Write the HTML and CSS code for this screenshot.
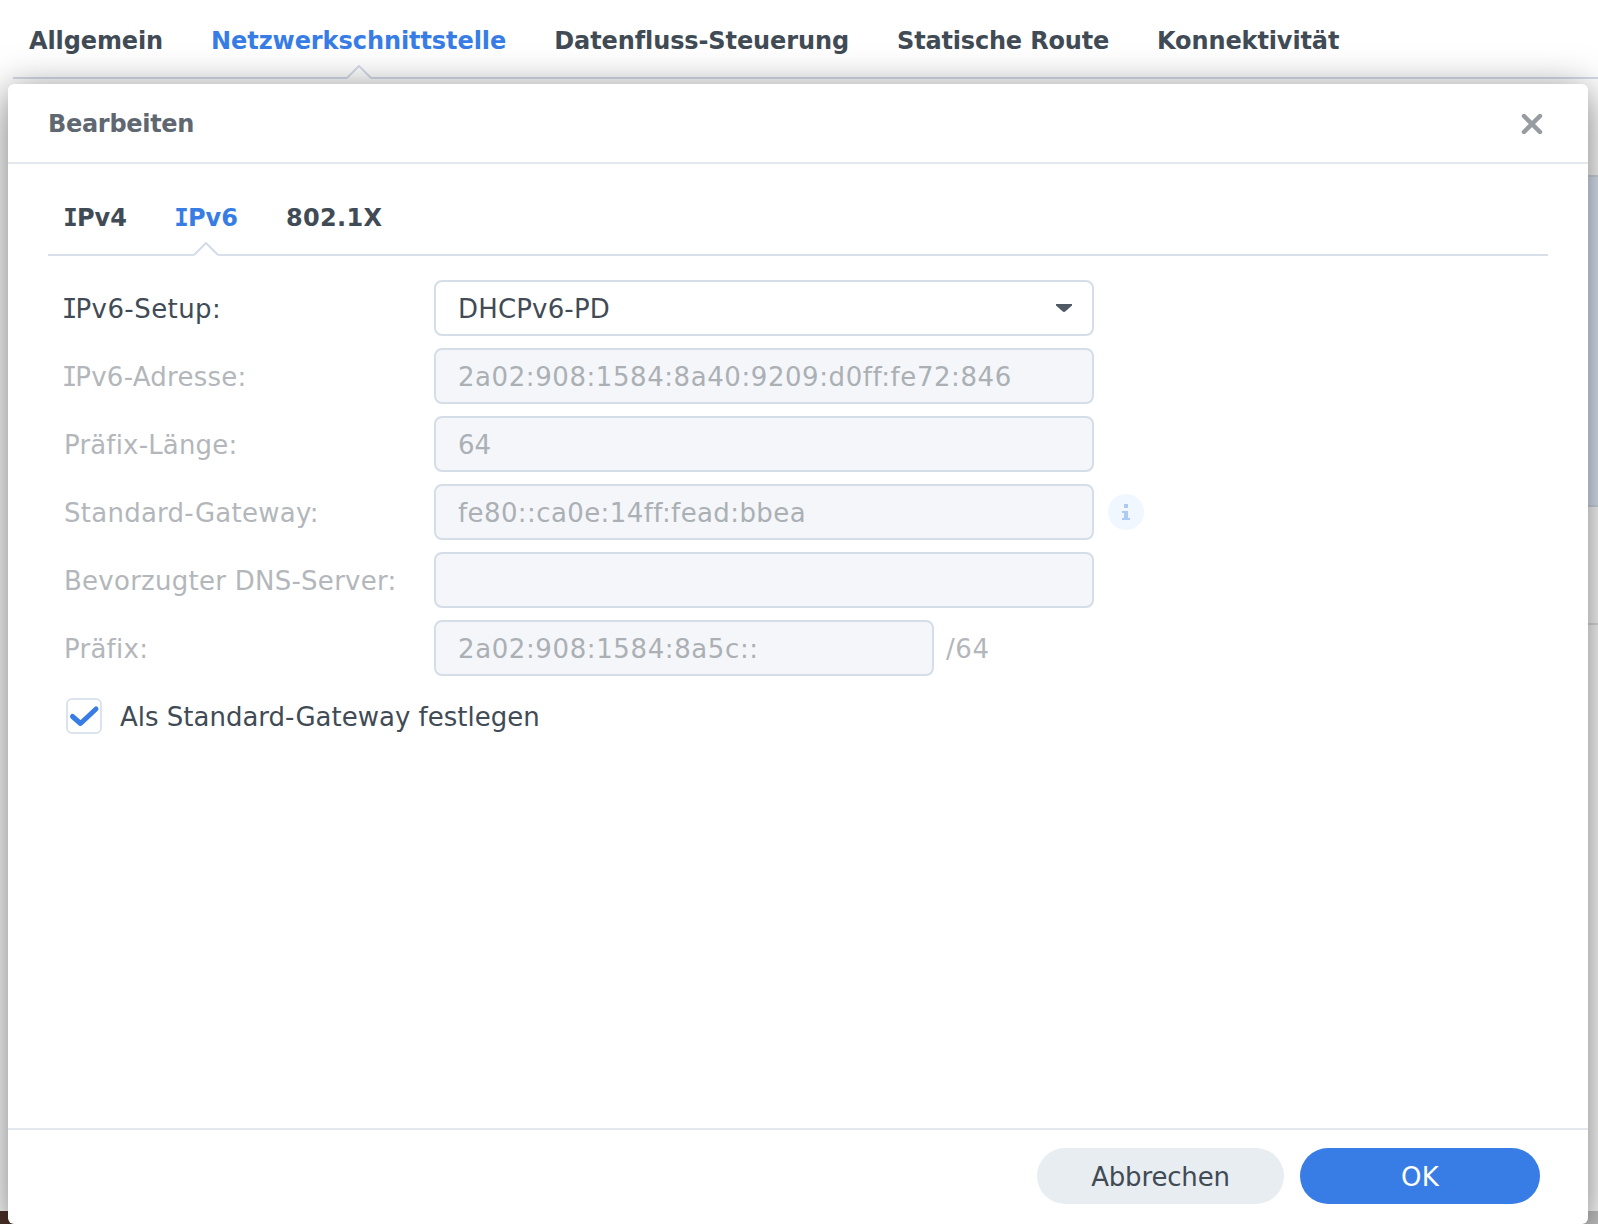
FILE: index.html
```html
<!DOCTYPE html>
<html lang="de">
<head>
<meta charset="utf-8">
<title>Bearbeiten</title>
<link rel="stylesheet" href="styles.css">
</head>
<body>
<div class="screen">
  <div class="page">
    <nav class="tabs page-tabs">
      <span class="tab t-allgemein">Allgemein</span>
      <span class="tab t-netz active">Netzwerkschnittstelle<svg class="notch" width="24" height="14" viewBox="0 0 24 14"><path class="notch-fill" d="M0 14V12L12 1L24 12V14Z"/><path class="notch-line" d="M0 13L12 1L24 13"/></svg></span>
      <span class="tab t-daten">Datenfluss-Steuerung</span>
      <span class="tab t-route">Statische Route</span>
      <span class="tab t-konn">Konnektivität</span>
    </nav>
    <div class="rows">
      <div class="row-selected"></div>
      <div class="row-plain"></div>
    </div>
  </div>
  <div class="desktop"></div>

  <section class="dialog">
    <header class="dialog-head">
      <h1 class="title">Bearbeiten</h1>
      <svg class="close" width="22" height="20" viewBox="0 0 22 20"><path d="M3 2L19 18M19 2L3 18"/></svg>
    </header>
    <div class="dialog-body">
      <nav class="tabs inner-tabs">
        <span class="tab t-v4"><span class="cap-i">I</span>Pv4</span>
        <span class="tab t-v6 active"><span class="cap-i">I</span>Pv6<svg class="notch" width="24" height="14" viewBox="0 0 24 14"><path class="notch-fill" d="M0 14V12L12 1L24 12V14Z"/><path class="notch-line" d="M0 13L12 1L24 13"/></svg></span>
        <span class="tab t-8021x">802.1X</span>
      </nav>
      <div class="form">
        <div class="field"><span class="label l-setup"><span class="cap-i">I</span>Pv6-Setup:</span><div class="box select"><span class="v-select">DHCPv6-PD</span><svg width="16" height="8" viewBox="0 0 16 8"><path d="M0 0H16V1.5L9.5 7.3Q8 8.5 6.5 7.3L0 1.5Z"/></svg></div></div>
        <div class="field off"><span class="label"><span class="cap-i">I</span>Pv6-Adresse:</span><div class="box"><span class="v-addr">2a02:908:1584:8a40:9209:d0ff:fe72:846</span></div></div>
        <div class="field off"><span class="label l-length">Präfix-Länge:</span><div class="box"><span>64</span></div></div>
        <div class="field off"><span class="label">Standard-Gateway:</span><div class="box"><span class="v-gateway">fe80::ca0e:14ff:fead:bbea</span></div><svg class="info" width="36" height="36" viewBox="0 0 36 36"><circle cx="18" cy="18" r="18"/><path d="M16 10H20V14H16ZM14 17H20V24H22V26H14V24H16V19H14Z"/></svg></div>
        <div class="field off"><span class="label">Bevorzugter DNS-Server:</span><div class="box"></div></div>
        <div class="field off"><span class="label">Präfix:</span><div class="box short"><span class="v-prefix">2a02:908:1584:8a5c::</span></div><span class="suffix">/64</span></div>
        <div class="check"><span class="checkbox"><svg width="32" height="32" viewBox="0 0 32 32"><path d="M4.5 16.5L12.5 23.5L28 9"/></svg></span><span class="check-text">Als Standard-Gateway festlegen</span></div>
      </div>
    </div>
    <footer class="dialog-foot">
      <button class="btn cancel">Abbrechen</button>
      <button class="btn ok">OK</button>
    </footer>
  </section>
</div>
</body>
</html>
```
FILE: styles.css
```css
* { box-sizing: border-box; }
body { margin: 0; font-family: Verdana, "DejaVu Sans", sans-serif; font-size: 26px; color: #414b55; font-variant-ligatures: none; }
.screen { position: relative; width: 1598px; height: 1224px; overflow: hidden; background: #fff; display: flex; flex-direction: column; }
.page { height: 1211px; }
.desktop { flex: 1; background: linear-gradient(90deg, #4d322b 0 50%, #c4c4c4 50%); }

.cap-i { font-family: "DejaVu Sans Mono", monospace; margin: 0 -.09em; }
.tab .cap-i { margin: 0 -.03em; }

.tabs { display: flex; gap: 48px; font-weight: 700; font-size: 24px; white-space: nowrap; }
.tab { position: relative; }
.tab.active { color: #387de5; }
.page-tabs { height: 79px; margin-left: 13px; padding: 25px 0 0 16px; border-bottom: 2px solid #d4dbe8; line-height: 32px; }
.t-allgemein, .t-konn { letter-spacing: -.12px; }
.t-netz { letter-spacing: -.07px; }
.t-daten { letter-spacing: -.1px; }
.t-route { letter-spacing: -.18px; }
.t-8021x { letter-spacing: .35px; }
.notch { position: absolute; left: 50%; margin-left: -12px; top: 40px; }
.notch-fill { fill: #fff; }
.notch-line { fill: none; stroke: #d4dce8; stroke-width: 2; }

.rows { padding: 96px 0 0 40px; }
.row-selected { height: 332px; background: #dfe9f8; border-top: 2px solid #d4dbe2; border-bottom: 2px solid #d4dbe6; }
.row-plain { height: 118px; border-bottom: 2px solid #e0e5ea; }

.dialog { position: absolute; left: 8px; top: 84px; width: 1580px; height: 1140px; background: #fff; border-radius: 6px; box-shadow: 0 8px 40px rgba(0,0,0,.55); display: flex; flex-direction: column; }
.dialog-head { height: 80px; border-bottom: 2px solid #e3e8ef; padding: 2px 45px 0 40px; display: flex; justify-content: space-between; align-items: center; }
.title { margin: 0; font-size: 24px; line-height: 32px; color: #5f6771; letter-spacing: -.3px; }
.close { fill: none; stroke: #969ca2; stroke-width: 4.5; stroke-linecap: round; }
.dialog-body { flex: 1; padding: 0 40px; }
.inner-tabs { height: 92px; padding: 38px 0 0 16px; border-bottom: 2px solid #d9dfea; line-height: 32px; }

.form { padding: 24px 0 0 16px; display: flex; flex-direction: column; gap: 12px; }
.field { display: flex; align-items: center; height: 56px; white-space: nowrap; }
.label { width: 370px; flex: none; padding-top: 2px; letter-spacing: .26px; }
.l-setup { letter-spacing: .44px; }
.l-length { letter-spacing: .17px; }
.off { color: #b3b7bb; }
.box { width: 660px; height: 56px; border: 2px solid #d5dee8; border-radius: 8px; background: #f4f6fa; padding: 0 20px 0 22px; display: flex; align-items: center; justify-content: space-between; }
.box > span { padding-top: 2px; }
.v-select { letter-spacing: .17px; }
.v-addr { letter-spacing: .57px; }
.v-gateway { letter-spacing: .41px; }
.v-prefix { letter-spacing: .61px; }
.off .box { color: #abb0b4; }
.box.select { background: #fff; }
.select svg { fill: #4f5a64; }
.box.short { width: 500px; }
.info { margin-left: 14px; }
.info circle { fill: #f1f7fe; }
.info path { fill: #adcaf5; }
.suffix { margin-left: 12px; padding-top: 2px; letter-spacing: .6px; }
.check { display: flex; align-items: center; height: 56px; gap: 18px; padding-left: 2px; }
.check-text { padding-top: 2px; }
.checkbox { width: 36px; height: 36px; border: 2px solid #dce3ed; border-radius: 6px; }
.checkbox svg { display: block; fill: none; stroke: #387de5; stroke-width: 5; stroke-linecap: round; stroke-linejoin: round; }

.dialog-foot { height: 96px; border-top: 2px solid #e3e8ef; padding: 18px 48px 0 0; display: flex; justify-content: flex-end; gap: 16px; }
.btn { height: 56px; border: 0; border-radius: 28px; font: inherit; padding: 2px 0 0; }
.cancel { width: 247px; background: #e8edf1; color: #414b55; letter-spacing: -.17px; }
.ok { width: 240px; background: #387de5; color: #fff; letter-spacing: .3px; }
```
